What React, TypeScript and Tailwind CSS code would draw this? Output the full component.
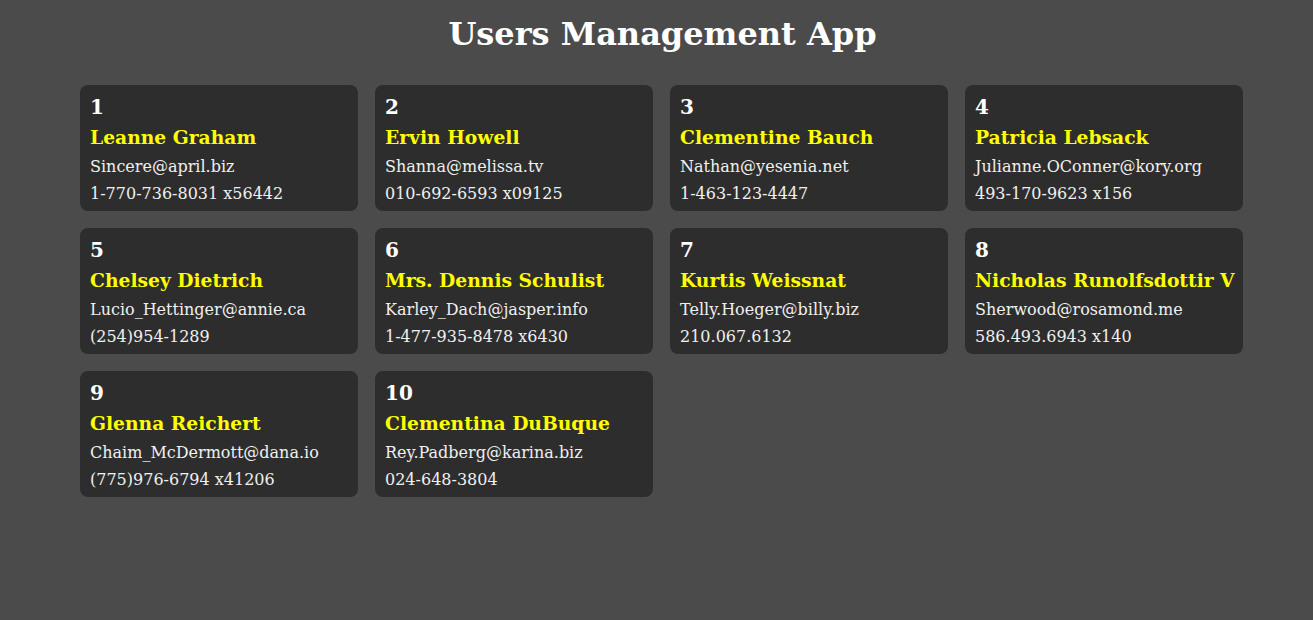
const users = [
  { id: 1, name: "Leanne Graham", email: "Sincere@april.biz", phone: "1-770-736-8031 x56442" },
  { id: 2, name: "Ervin Howell", email: "Shanna@melissa.tv", phone: "010-692-6593 x09125" },
  { id: 3, name: "Clementine Bauch", email: "Nathan@yesenia.net", phone: "1-463-123-4447" },
  { id: 4, name: "Patricia Lebsack", email: "Julianne.OConner@kory.org", phone: "493-170-9623 x156" },
  { id: 5, name: "Chelsey Dietrich", email: "Lucio_Hettinger@annie.ca", phone: "(254)954-1289" },
  { id: 6, name: "Mrs. Dennis Schulist", email: "Karley_Dach@jasper.info", phone: "1-477-935-8478 x6430" },
  { id: 7, name: "Kurtis Weissnat", email: "Telly.Hoeger@billy.biz", phone: "210.067.6132" },
  { id: 8, name: "Nicholas Runolfsdottir V", email: "Sherwood@rosamond.me", phone: "586.493.6943 x140" },
  { id: 9, name: "Glenna Reichert", email: "Chaim_McDermott@dana.io", phone: "(775)976-6794 x41206" },
  { id: 10, name: "Clementina DuBuque", email: "Rey.Padberg@karina.biz", phone: "024-648-3804" },
];

export default function App() {
  return (
    <div className="min-h-[620px] bg-[#4b4b4b] text-white font-['DejaVu_Serif',serif]">
      <h1 className="pt-[15px] pl-[12px] text-center text-[32px] font-bold leading-[normal]">Users Management App</h1>
      <div className="mt-[32px] ml-[80px] grid w-[1163px] grid-cols-4 gap-[17px]">
        {users.map((u) => (
          <div key={u.id} className="flex flex-col rounded-lg bg-[#2d2d2d] px-[10px] pt-[10px] pb-[8px]">
            <div className="text-[20px] font-bold leading-[normal]">{u.id}</div>
            <div className="mt-[7px] text-[18.72px] font-bold leading-[normal] text-[#ffff00] whitespace-nowrap">{u.name}</div>
            <div className="mt-[9px] text-[16px] leading-[normal] text-[#f0f0f0]">{u.email}</div>
            <div className="mt-[8px] text-[16px] leading-[normal] text-[#f0f0f0]">{u.phone}</div>
          </div>
        ))}
      </div>
    </div>
  );
}
